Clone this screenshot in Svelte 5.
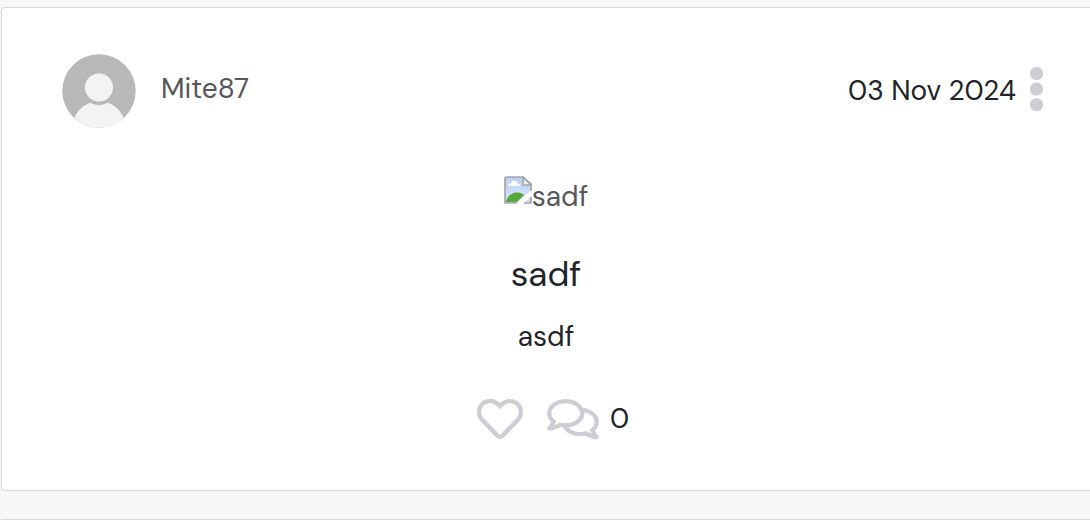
<script>
  const posts = [
    { author: 'Mite87', date: '03 Nov 2024', title: 'sadf', text: 'asdf', comments: 0 },
  ];
</script>

<main class="feed">
  {#each posts as post}
    <article class="card">
      <header class="head">
        <a class="author" href="#profile">
          <svg class="avatar" viewBox="0 0 74 74" aria-hidden="true">
            <defs>
              <clipPath id="avatar-clip"><circle cx="37" cy="37" r="36.7" /></clipPath>
            </defs>
            <g clip-path="url(#avatar-clip)">
              <rect width="74" height="74" fill="#b8b8b8" />
              <ellipse cx="37" cy="75" rx="27" ry="28" fill="#f3f3f3" />
              <circle cx="37" cy="34" r="17" fill="#b8b8b8" />
              <circle cx="37" cy="33.5" r="14" fill="#f3f3f3" />
            </g>
          </svg>
          <span>{post.author}</span>
        </a>
        <div class="meta">
          <time datetime="2024-11-03">{post.date}</time>
          <button class="icon-button" aria-label="Options">
            <svg class="dots" viewBox="0 0 14 48" aria-hidden="true">
              <circle cx="6.5" cy="6.5" r="6.6" />
              <circle cx="6.5" cy="22" r="6.6" />
              <circle cx="6.5" cy="37.5" r="6.6" />
            </svg>
          </button>
        </div>
      </header>

      <a class="picture" href="#post">
        <svg class="broken" viewBox="0 0 28 28" aria-hidden="true">
          <defs>
            <linearGradient id="sky" x1="0" y1="0" x2="0" y2="1">
              <stop offset="0" stop-color="#b9cdf4" />
              <stop offset="1" stop-color="#dde7fb" />
            </linearGradient>
          </defs>
          <path d="M2 1h17l8 7v7L14 27H1V2z" fill="url(#sky)" />
          <path d="M4 10c0-2 1.500-2.500 3-2.500 .5-4 6-4 6.500 0 1.500 0 2.500.9 2.500 2.500z" fill="#fff" />
          <path d="M2 26c1-6 6-9.500 11-9.500 3 0 5.500 1 7 2.500L13 26z" fill="#55a93c" />
          <path d="M12 28 28 13v6L19 28z" fill="#fff" />
          <path d="M20 27 27 21v6z" fill="#cfdcea" />
          <path d="M13 27H1V3Q1 1 3 1H19L27 8v7M27 21v6H20" fill="none" stroke="#a6a6aa" stroke-width="1.700" />
          <path d="M19 1v8h8z" fill="#f2f2f2" stroke="#a6a6aa" stroke-width="1.700" />
        </svg>
        <span>{post.title}</span>
      </a>

      <h2>{post.title}</h2>
      <p>{post.text}</p>

      <footer class="actions">
        <button class="icon-button" aria-label="Like">
          <svg class="heart" viewBox="0 0 512 512" aria-hidden="true">
            <path d="M458.4 64.3C400.6 15.7 311.3 23 256 79.3 200.7 23 111.4 15.6 53.6 64.3-21.6 127.6-10.6 230.8 43 285.5l175.4 178.7c10 10.2 23.4 15.9 37.6 15.9 14.3 0 27.6-5.6 37.6-15.8L469 285.6c53.5-54.7 64.7-157.9-10.6-221.3zm-23.6 187.5L259.4 430.5c-2.4 2.4-4.4 2.4-6.8 0L77.2 251.8c-36.5-37.2-43.9-107.6 7.3-150.7 38.9-32.7 98.9-27.8 136.5 10.5l35 35.7 35-35.7c37.8-38.5 97.8-43.2 136.5-10.6 51.1 43.1 43.5 113.9 7.3 150.8z" />
          </svg>
        </button>
        <button class="icon-button count" aria-label="Comments">
          <svg class="comments" viewBox="0 0 576 512" aria-hidden="true">
            <path d="M532 386.2c27.5-27.1 44-61.1 44-98.2 0-80-76.5-146.1-176.2-157.9C368.3 72.5 294.3 32 208 32 93.1 32 0 103.6 0 192c0 37 16.5 71 44 98.2-15.3 30.7-37.3 54.5-37.7 54.9-6.3 6.7-8.1 16.5-4.4 25 3.6 8.5 12 14 21.2 14 53.5 0 96.7-20.2 125.2-38.8 9.2 2.1 18.7 3.7 28.4 4.9C208.1 407.6 281.8 448 368 448c20.8 0 40.8-2.4 59.8-6.8C456.3 459.7 499.4 480 553 480c9.2 0 17.5-5.5 21.2-14 3.6-8.5 1.9-18.3-4.4-25-.4-.3-22.5-24.1-37.8-54.8zm-392.8-92.3L122.1 305c-14.1 9.1-28.5 16.3-43.1 21.4 2.7-4.7 5.4-9.7 8-14.8l15.5-31.1L77.7 256C64.2 242.6 48 220.7 48 192c0-60.7 73.3-112 160-112s160 51.3 160 112-73.3 112-160 112c-16.5 0-33-1.9-49-5.6l-19.8-4.5zM498.3 352l-24.7 24.4 15.5 31.1c2.6 5.1 5.3 10.1 8 14.8-14.6-5.1-29-12.3-43.1-21.4l-17.1-11.1-19.9 4.6c-16 3.7-32.5 5.6-49 5.6-54 0-102.2-20.1-131.3-49.7C338 339.5 416 272.9 416 192c0-3.4-.4-6.7-.7-10C479.7 196.5 528 238.8 528 288c0 28.7-16.2 50.6-29.7 64z" />
          </svg>
          <span>{post.comments}</span>
        </button>
      </footer>
    </article>
  {/each}
  <article class="card next" aria-label="Next post"></article>
</main>

<style>
  :global(body) {
    margin: 0;
    background: #f7f7f7;
  }

  .feed {
    display: flex;
    flex-direction: column;
    gap: 28px;
    padding: 7px 0 0 1px;
    color: #212529;
    font-family: 'DM Sans', Inter, sans-serif;
    font-size: 28px;
    line-height: 42px;
  }

  .card {
    display: flex;
    flex-direction: column;
    align-items: center;
    padding: 46px 60px 48px;
    background: #fff;
    border: 1px solid #d9dadd;
    border-right: 0;
    border-radius: 4px 0 0 4px;
  }

  .next {
    padding: 0;
    border-bottom: 0;
  }

  .head {
    display: flex;
    align-self: stretch;
    justify-content: space-between;
    align-items: center;
    margin-right: -14px;
  }

  a {
    color: #55575a;
    text-decoration: none;
  }

  .author {
    display: flex;
    align-items: center;
    gap: 25px;
  }

  .author span {
    padding-bottom: 4px;
  }

  .avatar {
    width: 74px;
    height: 74px;
  }

  .meta {
    display: flex;
    align-items: center;
    gap: 14px;
  }

  .icon-button {
    display: flex;
    align-items: center;
    padding: 0;
    border: 0;
    background: none;
    color: inherit;
    font: inherit;
    cursor: pointer;
  }

  .icon-button svg {
    fill: #cecdd3;
    overflow: visible;
  }

  .dots {
    width: 14px;
    height: 48px;
  }

  .picture {
    display: flex;
    align-items: center;
    margin-top: 48px;
  }

  .broken {
    width: 28px;
    height: 28px;
    margin-bottom: 14px;
  }

  h2 {
    margin: 35px 0 0;
    font-size: 35px;
    font-weight: 400;
    line-height: 42px;
  }

  p {
    margin: 21px 0 0;
  }

  .actions {
    display: flex;
    align-items: center;
    gap: 24px;
    margin-top: 38px;
    padding-left: 14px;
  }

  .heart {
    width: 46px;
    height: 46px;
  }

  .comments {
    width: 52px;
    height: 46px;
  }

  .count {
    gap: 11px;
  }
</style>
